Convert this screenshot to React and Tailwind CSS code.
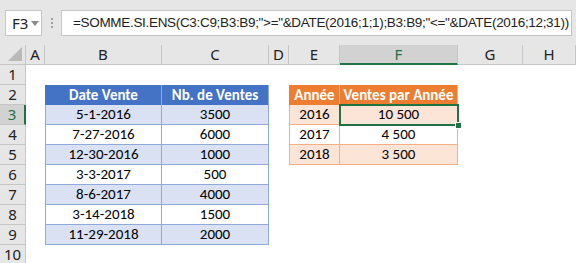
import React from 'react';

const cols = ['A', 'B', 'C', 'D', 'E', 'F', 'G', 'H'];

const sales = [
  ['5-1-2016', '3500'],
  ['7-27-2016', '6000'],
  ['12-30-2016', '1000'],
  ['3-3-2017', '500'],
  ['8-6-2017', '4000'],
  ['3-14-2018', '1500'],
  ['11-29-2018', '2000'],
];

const years = [
  ['2016', '10\u00a0500'],
  ['2017', '4\u00a0500'],
  ['2018', '3\u00a0500'],
];

const cellFont = { fontFamily: 'Carlito, Lato, "Liberation Sans", sans-serif' };

const FormulaBar = () => (
  <div className="h-[45px] bg-[#e6e6e6] flex items-start pt-[10px] pl-[5px]">
    <div className="w-[37px] h-[26px] bg-white border border-[#c6c6c6] flex items-center pl-[6px] text-[15px] text-[#222]">
      F3
      <svg width="8" height="5" viewBox="0 0 8 5" className="ml-[3px]">
        <path d="M0 0h8L4 5z" fill="#8a8a8a" />
      </svg>
    </div>
    <div className="w-[19px] h-[26px] flex flex-col items-center justify-center gap-[2px]">
      <span className="w-[2px] h-[2px] bg-[#a0a0a0]" />
      <span className="w-[2px] h-[2px] bg-[#a0a0a0]" />
      <span className="w-[2px] h-[2px] bg-[#a0a0a0]" />
    </div>
    <div
      className="w-[511px] h-[26px] bg-white border border-[#c6c6c6] flex items-center pl-[11px] text-[13.5px] tracking-[-0.32px] text-[#222] whitespace-nowrap overflow-hidden"
      style={{ fontFamily: '"Liberation Sans", Arial, sans-serif' }}
    >
      =SOMME.SI.ENS(C3:C9;B3:B9;"&gt;="&amp;DATE(2016;1;1);B3:B9;"&lt;="&amp;DATE(2016;12;31))
    </div>
  </div>
);

const ColHeader = ({ label }) => {
  if (label === 'F') {
    return (
      <div className="bg-[#d2d2d2] border-r border-[#c6c6c6] border-b-2 border-b-[#217346] flex items-center justify-center text-[15px] text-[#217346]">
        {label}
      </div>
    );
  }
  return (
    <div className="bg-[#e6e6e6] border-r border-b border-[#c6c6c6] flex items-center justify-center text-[15px] text-[#222]">
      {label}
    </div>
  );
};

const RowHeader = ({ n }) => {
  if (n === 3) {
    return (
      <div className="bg-[#d2d2d2] border-r-2 border-r-[#217346] border-b border-b-[#c6c6c6] flex items-center justify-center text-[15px] text-[#217346]">
        {n}
      </div>
    );
  }
  return (
    <div className="bg-[#e6e6e6] border-r border-b border-[#c6c6c6] flex items-center justify-center text-[15px] text-[#222]">
      {n}
    </div>
  );
};

const Blank = () => <div className="bg-white" />;

const BlueHead = ({ children, first }) => (
  <div
    className={`bg-[#4472c4] text-white font-bold text-[15px] flex items-center justify-center border-r border-[#8ea9db] ${first ? 'border-l border-l-[#4472c4]' : ''}`}
    style={cellFont}
  >
    {children}
  </div>
);

const BlueCell = ({ children, shade, first }) => (
  <div
    className={`${shade ? 'bg-[#d9e1f2]' : 'bg-white'} text-black text-[15px] flex items-center justify-center border-r border-b border-[#8ea9db] ${first ? 'border-l' : ''}`}
    style={cellFont}
  >
    {children}
  </div>
);

const OrangeHead = ({ children, first }) => (
  <div
    className={`bg-[#ed7d31] text-white font-bold text-[15px] flex items-center justify-center border-r border-[#f4b084] ${first ? 'border-l border-l-[#ed7d31]' : ''}`}
    style={cellFont}
  >
    {children}
  </div>
);

const OrangeCell = ({ children, shade, first }) => (
  <div
    className={`${shade ? 'bg-[#fce4d6]' : 'bg-white'} text-black text-[15px] flex items-center justify-center border-r border-b border-[#f4b084] ${first ? 'border-l' : ''}`}
    style={cellFont}
  >
    {children}
  </div>
);

const Sheet = () => {
  const rows = [];
  for (let n = 1; n <= 10; n++) {
    const cells = [<RowHeader key="h" n={n} />, <Blank key="a" />];
    if (n === 2) {
      cells.push(<BlueHead key="b" first>Date Vente</BlueHead>);
      cells.push(<BlueHead key="c">Nb. de Ventes</BlueHead>);
    } else if (n >= 3 && n <= 9) {
      const [d, v] = sales[n - 3];
      const shade = n % 2 === 1;
      cells.push(<BlueCell key="b" shade={shade} first>{d}</BlueCell>);
      cells.push(<BlueCell key="c" shade={shade}>{v}</BlueCell>);
    } else {
      cells.push(<Blank key="b" />, <Blank key="c" />);
    }
    cells.push(<Blank key="d" />);
    if (n === 2) {
      cells.push(<OrangeHead key="e" first>Année</OrangeHead>);
      cells.push(<OrangeHead key="f">Ventes par Année</OrangeHead>);
    } else if (n >= 3 && n <= 5) {
      const [y, v] = years[n - 3];
      const shade = n % 2 === 1;
      cells.push(<OrangeCell key="e" shade={shade} first>{y}</OrangeCell>);
      cells.push(<OrangeCell key="f" shade={shade}>{v}</OrangeCell>);
    } else {
      cells.push(<Blank key="e" />, <Blank key="f" />);
    }
    cells.push(<Blank key="g" />, <Blank key="h" />);
    rows.push(...cells);
  }

  return (
    <div className="relative grid grid-cols-[26px_19px_117px_107px_20px_51px_118px_65px_1fr] auto-rows-[20px]">
      <div className="bg-[#e6e6e6] border-r border-b border-[#c6c6c6] relative">
        <svg width="14" height="14" viewBox="0 0 14 14" className="absolute right-[3px] bottom-[3px]">
          <path d="M14 0V14H0z" fill="#b9b9b9" />
        </svg>
      </div>
      {cols.map((c) => (
        <ColHeader key={c} label={c} />
      ))}
      {rows}
      {/* active cell F3 */}
      <div className="absolute left-[339px] top-[59px] w-[120px] h-[22px] border-2 border-[#217346] pointer-events-none" />
      <div className="absolute left-[455px] top-[77px] w-[7px] h-[7px] bg-[#217346] border border-white" />
    </div>
  );
};

export default function App() {
  return (
    <div
      className="w-[576px] h-[263px] overflow-hidden bg-white"
      style={{ fontFamily: '"Segoe UI", "Noto Sans", "Open Sans", sans-serif' }}
    >
      <FormulaBar />
      <Sheet />
    </div>
  );
}
